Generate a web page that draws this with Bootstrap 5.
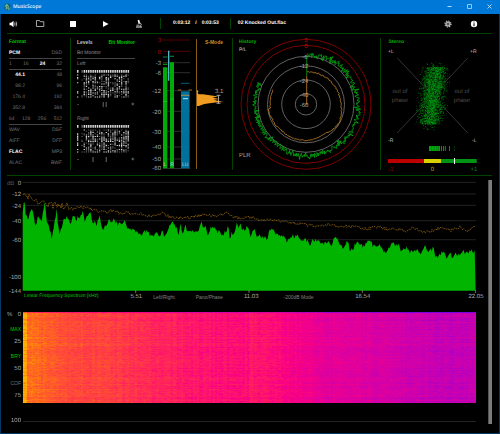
<!DOCTYPE html>
<html lang="en">
<head>
<meta charset="utf-8">
<meta name="viewport" content="width=device-width, initial-scale=1">
<title>MusicScope</title>
<link href="https://cdn.jsdelivr.net/npm/bootstrap@5.3.0/dist/css/bootstrap.min.css" rel="stylesheet">
<style>
  :root { --line: #004400; --dim: #747474; --soft: #b0b0b0; --go: #00c800; }
  body { background: #000; color: var(--soft); font-family: "Liberation Sans", Arial, sans-serif; font-size: 5px; line-height: 11px; text-rendering: geometricPrecision; }
  button { background: none; border: 0; padding: 0; color: inherit; line-height: inherit; text-align: center; white-space: nowrap; }
  svg { display: block; overflow: visible; }
  svg.fluid { width: 100%; height: auto; }
  svg text { font-size: 6px; fill: #a8a8a8; }
  svg .small-label { font-size: 5px; fill: #d0d0d0; }
  svg .head-label { font-size: 5px; font-weight: bold; fill: #00b000; }
  svg .faint { fill: #4c4c4c; }
  .titlebar { background: #0078d7; height: 14px; color: #e8f4ff; font-family: "Open Sans", "Noto Sans", sans-serif; padding-left: 4px; }
  .titlebar button { width: 20px; height: 14px; }
  .titlebar h1 { font-size: 5px; line-height: 14px; margin: 0 0 0 2px; }
  .frame { border: 1px solid #053a66; border-top: 0; padding: 0 7px 4px 6px; }
  .tools { height: 20px; border-bottom: 1px solid var(--line); color: #fff; }
  .tools button { width: 12px; height: 12px; }
  .tools .set { gap: 21px; margin-left: 15px; }
  .tools .clock { border: solid var(--line); border-width: 0 1px; margin-left: 15px; padding: 0 11px 0 12px; gap: 5px; }
  .tools .track-name { margin-left: 7px; }
  .tools .side { gap: 14px; padding-right: 12px; }
  .panels { display: grid; grid-template-columns: minmax(0,64fr) minmax(0,72fr) minmax(0,90fr) minmax(0,148fr) minmax(0,111fr); padding: 4px 0 5px; border-bottom: 1px solid var(--line); }
  .panels > section { position: relative; }
  .ruled { border-right: 1px solid var(--line); }
  .panel-head { line-height: 8px; margin-bottom: 2px; font-weight: bold; color: #c0c0c0; }
  .panel-head h2 { font-size: 5px; line-height: 8px; font-weight: bold; }
  .go, .panel-head .go { color: var(--go); }
  .formats { padding: 0 8px 0 2px; color: var(--dim); }
  .formats .line, .monitor .line { border-bottom: 1px solid #444; line-height: 10px; }
  .formats .rate { width: 16px; text-align: right; }
  .formats .on { color: #fff; font-weight: bold; }
  .monitor { padding: 0 8px 0 6px; color: #8c8c8c; }
  .smode { position: absolute; top: 0; right: 9px; line-height: 8px; color: #d08c20; font-weight: bold; }
  .track { width: 4px; background: #7c7c7c; border-left: 1px solid #555; margin: 4px 0 0 3px; }
  .axis { display: grid; grid-template-columns: repeat(4, minmax(0,1fr)); margin: 0 9px 10px 16px; line-height: 9px; color: #808080; }
  .axis .tick { width: 16px; margin: 1px -8px 0 auto; text-align: center; font-size: 6px; line-height: 9px; color: #a8a8a8; }
  .cell-a { padding-left: 1px; }
  .cell-b { padding-left: 17px; gap: 21px; }
  .cell-c { padding-left: 34px; }
  .history-scale { width: 14px; margin-right: 2px; padding-bottom: 4px; line-height: 6px; color: #a8a8a8; font-size: 6px; }
  .history-scale button { line-height: 6px; font-size: 5px; }
  .history-scale .off { color: #707070; }
  .heat { width: 100%; height: auto; display: block; }
  .heat-wrap { margin-right: 9px; min-width: 0; }
  .full { margin: 15px 9px 0 0; line-height: 6px; font-size: 6px; color: #a8a8a8; }
  .full span { width: 14px; margin-right: 2px; text-align: right; }
  .full hr { margin: 0; opacity: 1; border-color: #222; }
</style>
<script src="https://cdn.jsdelivr.net/npm/bootstrap@5.3.0/dist/js/bootstrap.bundle.min.js"></script>
</head>
<body>
<div class="min-vh-100 d-flex flex-column">
  <header class="titlebar d-flex align-items-center">
    <svg width="7" height="8" viewBox="0 0 7 8"><circle cx="3.500" cy="4" r="3.400" fill="#14607c"/><path d="M1 4a2.500 2.500 0 0 1 2-2.400M6 4.500A2.500 2.500 0 0 1 4.500 6.400" fill="none" stroke="#5cc08c" stroke-width=".9"/><path d="M2.200 6.500 3 1.500 4.400 3.400 3.800 5.200 5 6.800" fill="none" stroke="#9ad8a0" stroke-width=".8"/></svg>
    <h1 class="fw-semibold">MusicScope</h1>
    <div class="ms-auto d-flex">
      <button type="button" aria-label="Minimize"><svg width="20" height="14"><path d="M7.500 6.500h4" stroke="#b8dcff"/></svg></button>
      <button type="button" aria-label="Maximize"><svg width="20" height="14"><path d="M7.500 4.500h4v4h-4z" fill="none" stroke="#b8dcff" stroke-width=".8"/></svg></button>
      <button type="button" aria-label="Close"><svg width="20" height="14"><path d="M7.500 4.500l4 4m0-4l-4 4" stroke="#d8ecff" stroke-width=".8"/></svg></button>
    </div>
  </header>

  <main class="frame flex-grow-1">
    <nav class="tools d-flex align-items-center">
      <button type="button" aria-label="Volume"><svg width="12" height="12"><path d="M2.500 4.800h1.700L6.500 2.800v6.400L4.200 7.300H2.500z" fill="#fff"/><path d="M7.600 4.500q1 1.500 0 3M9 3.600q1.500 2.400 0 4.800" fill="none" stroke="#ddd" stroke-width=".8"/></svg></button>
      <div class="set d-flex">
        <button type="button" aria-label="Open"><svg width="12" height="12"><path d="M2.500 8.500v-6h3l.7 1.200h3.600v4.800z" fill="none" stroke="#ccc" stroke-width=".8"/></svg></button>
        <button type="button" aria-label="Stop"><svg width="12" height="12"><path d="M3 3h6v6H3z" fill="#fff"/></svg></button>
        <button type="button" aria-label="Play"><svg width="12" height="12"><path d="M3 3l5.500 3L3 9z" fill="#fff"/></svg></button>
        <button type="button" aria-label="Analyze"><svg width="12" height="12"><path d="M4.600 2.300l1.700-.5.9 3.600-1.700.5zM3 8.600h6v1H3z" fill="#eee"/><path d="M7 4.500q2.300 1.600.3 4.100M3.500 7.200h3" fill="none" stroke="#ddd" stroke-width=".8"/></svg></button>
      </div>
      <div class="clock d-flex fw-bold"><span>0:03:12</span><span>/</span><span>0:03:53</span></div>
      <div class="track-name fw-bold">02 Knocked Out.flac</div>
      <div class="side d-flex ms-auto">
        <button type="button" aria-label="Settings"><svg width="12" height="12"><circle cx="6" cy="6" r="2.600" fill="#aaa"/><circle cx="6" cy="6" r="3" fill="none" stroke="#ccc" stroke-width="1.200" stroke-dasharray="1.180"/><circle cx="6" cy="6" r="1" fill="#333"/></svg></button>
        <button type="button" aria-label="Information"><svg width="12" height="12"><circle cx="6" cy="6" r="3.200" fill="#fff"/><path d="M5.500 3.600h1v1h-1zM5.500 5.300h1v3h-1z" fill="#000"/></svg></button>
      </div>
    </nav>

    <div class="panels">
      <section class="ruled formats">
        <div class="panel-head"><h2 class="m-0 go">Format</h2></div>
        <div class="d-flex justify-content-between line"><span class="on">PCM</span><span>DSD</span></div>
        <div class="d-flex justify-content-between line"><span>1</span><span>16</span><span class="on">24</span><span>32</span></div>
        <div class="d-flex justify-content-between"><span class="rate on">44.1</span><span>48</span></div>
        <div class="d-flex justify-content-between"><span class="rate">88.2</span><span>96</span></div>
        <div class="d-flex justify-content-between"><span class="rate">176.4</span><span>192</span></div>
        <div class="d-flex justify-content-between"><span class="rate">352.8</span><span>384</span></div>
        <div class="d-flex justify-content-between line"><span>64</span><span>128</span><span>256</span><span>512</span></div>
        <div class="d-flex justify-content-between"><span>WAV</span><span>DSF</span></div>
        <div class="d-flex justify-content-between"><span>AIFF</span><span>DFF</span></div>
        <div class="d-flex justify-content-between"><span class="on">FLAC</span><span>MP3</span></div>
        <div class="d-flex justify-content-between"><span>ALAC</span><span>BWF</span></div>
      </section>

      <section class="monitor">
        <div class="panel-head d-flex justify-content-between"><button type="button" class="fw-bold">Levels</button><button type="button" class="fw-bold go">Bit Monitor</button></div>
        <div class="line">Bit Monitor</div>
        <div>Left</div>
        <svg class="fluid" viewBox="0 0 58 44"><g id="bitsL"></g><path d="M26.200 32v5M29.200 32v5" stroke="#999" stroke-width=".7"/><text x="0" y="36">-</text><text x="54" y="36">+</text></svg>
        <div>Right</div>
        <svg class="fluid" viewBox="0 0 58 44"><g id="bitsR"></g><path d="M16 32v5M29.200 32v5" stroke="#999" stroke-width=".7"/><text x="0" y="36">-</text><text x="54" y="36">+</text></svg>
      </section>

      <section class="ruled">
        <svg class="fluid" viewBox="143 38 89 132">
          <path d="M163 62.700h27M163 72.700h27M163 90.700h27M163 111.300h27M163 131.300h27M163 147h27M163 159h27M163 168.500h27" stroke="#383838" stroke-width=".8"/>
          <path d="M163 40h27M163 51.300h27" stroke="#700000" stroke-width=".8"/>
          <g text-anchor="end">
            <text x="161" y="42" style="fill:#b00000">3</text><text x="161" y="53.500" style="fill:#b00000">0</text>
            <text x="161" y="65">-3</text><text x="161" y="75">-6</text><text x="161" y="93">-12</text><text x="161" y="113.500">-20</text><text x="161" y="133.500">-30</text><text x="161" y="149">-40</text><text x="161" y="161">-50</text><text x="161" y="170">-60</text>
          </g>
          <path d="M163 67.300h4.300v101H163zM170 62.300h4v106h-4z" fill="#00aa08"/>
          <path d="M163 64.300h4.300M163 101.500h4.300M170 99h4" stroke="#00d820" stroke-width=".8"/>
          <path d="M163 57h4.300M170 56.300h4" stroke="#009c50" stroke-width=".9"/>
          <path d="M168.700 50.700v30" stroke="#60c8e0" stroke-width="1.200"/>
          <path d="M181 91.300h8.500v77H181z" fill="#00709c"/>
          <path d="M181 83.300h8.500" stroke="#006080" stroke-width="1"/>
          <path d="M181 95.300h8.500" stroke="#a09050" stroke-width="1"/>
          <path d="M183 98.700h5" stroke="#fff" stroke-width=".8"/>
          <path d="M178 90h14" stroke="#b07818" stroke-width=".9" stroke-dasharray="3.500 7"/>
          <text x="163.500" y="166" class="small-label">L</text><text x="170.200" y="166" class="small-label">R</text><text x="182" y="166" class="small-label">LU</text>
          <path d="M196.500 39v130" stroke="#8a5c14" stroke-width="1"/>
          <path d="M197 90l1.500 1-.8 2 1 1.300H203l5 .6 7 1 3.500.8-6 .6 3 .9 4 .8-6 .8 4 .9 6 1.200-8 .7-6 .6-5 .8-3 .9-2.500 1L197 106z" fill="#f09c20"/>
          <path d="M218.500 95.300v8M216.500 95.300h4M216.500 103.300h4" stroke="#ddd" stroke-width=".7"/>
          <text x="215" y="93">3.1</text>
        </svg>
        <button type="button" class="smode">S-Mode</button>
      </section>

      <section class="ruled">
        <svg class="fluid" viewBox="233 38 147 132">
          <g fill="none" stroke="#6c6c6c" stroke-width=".9"><circle cx="306" cy="104.300" r="48"/><circle cx="306" cy="104.300" r="38.500"/><circle cx="306" cy="104.300" r="24.300"/><circle cx="306" cy="104.300" r="10.700"/></g>
          <g fill="none" stroke="#a00000" stroke-width=".8"><circle cx="306" cy="104.300" r="65"/><circle cx="306" cy="104.300" r="59"/></g>
          <path id="plr" fill="none" stroke="#c88420" stroke-width=".8"/>
          <path id="ppl" fill="none" stroke="#00ac10" stroke-width=".8"/>
          <path d="M306.700 76V56" stroke="#009c08" stroke-width=".8"/><path d="M306.700 105V76" stroke="#c88420" stroke-width=".8"/>
          <g text-anchor="middle"><text x="306" y="42" style="fill:#d00000">3</text><text x="306" y="48" style="fill:#d00000">0</text><text x="305" y="58.500">-6</text><text x="304" y="68">-12</text><text x="304" y="82.500">-24</text><text x="304" y="96.500">-40</text><text x="304" y="107">-60</text></g>
          <text x="239" y="43" class="head-label">History</text>
          <text x="239" y="51" class="small-label">P/L</text><text x="239" y="157">PLR</text>
        </svg>
      </section>

      <section>
        <svg class="fluid" viewBox="381 38 111 132">
          <path d="M397.300 58l70.500 75M467.700 58l-70.500 75" stroke="#404040" stroke-width=".8"/>
          <g id="cloud"></g>
          <text x="388.500" y="43" class="head-label">Stereo</text>
          <text x="388" y="53" class="small-label">+L</text><text x="470" y="53" class="small-label">+R</text><text x="388" y="142" class="small-label">-R</text><text x="472" y="142" class="small-label">-L</text>
          <g text-anchor="middle"><text x="400" y="93" class="faint">out of</text><text x="400" y="102" class="faint">phase</text><text x="462" y="93" class="faint">out of</text><text x="462" y="102" class="faint">phase</text></g>
          <path d="M429 146h11v5h-11z" fill="#00a810"/><path d="M431.500 146v5M434 146v5M436.800 146v5M438.500 146v5" stroke="#006808" stroke-width=".6"/><path d="M441.500 146v5M443.500 146v5M445.300 146v5M449.500 146v5" stroke="#00a810" stroke-width=".9"/><path d="M454.500 146v5" stroke="#004808" stroke-width=".6"/>
          <path d="M388 159h36v4h-36z" fill="#bc0000"/><path d="M424 159h17v4h-17z" fill="#d8d000"/><path d="M441 159h35.700v4H441z" fill="#009414"/><path d="M454.500 158v6" stroke="#fff"/>
          <text x="388" y="170.500" style="fill:#a00000">-1</text><text x="432.500" y="170.500" text-anchor="middle" style="fill:#b0a800">0</text><text x="470.500" y="170.500" style="fill:#008810">+1</text>
        </svg>
      </section>
    </div>

    <div class="d-flex">
      <div class="flex-grow-1 w-100">
        <svg class="fluid" viewBox="7 176 478 116">
          <path d="M22.700 182.300h453M22.700 194h453M22.700 205.300h453M22.700 220.700h453M22.700 239.700h453" stroke="#262626" stroke-width=".9"/>
          <path id="spectrum" fill="#00b400"/>
          <path id="peaks" fill="none" stroke="#9a6a10" stroke-width=".8" stroke-dasharray="1.500 .9"/>
          <path d="M135.700 290v3M249 290v3M362.300 290v3M475.400 290v3" stroke="#999" stroke-width=".7"/>
          <text x="7" y="184.500" style="fill:#585858">dB</text>
          <g text-anchor="end"><text x="21" y="184.500">0</text><text x="21" y="196.200">-12</text><text x="21" y="207.500">-24</text><text x="21" y="223">-40</text><text x="21" y="242">-60</text><text x="21" y="278.500">-100</text><text x="21" y="292.500">-144</text></g>
        </svg>
        <div class="axis">
          <div class="d-flex cell-a"><span class="go text-nowrap">Linear Frequency Spectrum [kHz]</span><span class="tick">5.51</span></div>
          <div class="d-flex cell-b"><button type="button">Left/Right</button><button type="button">Pano/Phase</button><span class="tick">11.03</span></div>
          <div class="d-flex cell-c"><button type="button">-200dB Mode</button><span class="tick">16.54</span></div>
          <div class="d-flex"><span class="tick">22.05</span></div>
        </div>
        <div class="d-flex">
          <div class="history-scale d-flex flex-column justify-content-between align-items-end flex-shrink-0">
            <div class="d-flex justify-content-between w-100"><span>%</span><span>0</span></div>
            <button type="button" class="go">MAX</button><span>25</span>
            <button type="button" class="go">BRY</button><span>50</span>
            <button type="button" class="off">COF</button><span>75</span>
          </div>
          <div class="heat-wrap flex-grow-1"><canvas id="heat" class="heat" width="453" height="91"></canvas></div>
        </div>
        <div class="full d-flex align-items-center"><span class="flex-shrink-0">100</span><hr class="flex-grow-1"></div>
      </div>
      <div class="track flex-shrink-0"></div>
    </div>
  </main>
</div>

<script>
let seed = 7;
const rnd = () => (seed = (seed * 16807) % 2147483647) / 2147483647;
const noise = a => (rnd() - .5) * 2 * a;
const gauss = () => (rnd() + rnd() + rnd() - 1.5) / 1.5;
const at = (list, x) => {
  let i = 0;
  while (i < list.length - 4 && list[i + 2] < x) i += 2;
  const k = Math.max(0, Math.min(1, (x - list[i]) / (list[i + 2] - list[i])));
  return list[i + 1] + k * (list[i + 3] - list[i + 1]);
};
const byId = id => document.getElementById(id);

// Bit usage grids
for (const id of ['bitsL', 'bitsR']) {
  let bright = '', dim = '';
  for (let c = 0; c < 24; c++) {
    if (c === 1) continue;
    const x = (c * 2.2).toFixed(1);
    const head = `M${x} 0h1.500v2.700h-1.500z`;
    if (c === 2) dim += head; else bright += head;
    for (let r = 0; r < 18; r++) {
      const p = rnd();
      const cell = `M${x} ${(4.4 + r * 1.3).toFixed(1)}h1.300v1h-1.300z`;
      if (c === 2) { if (p < .3) dim += cell; }
      else if (p < .38) bright += cell;
      else if (p < .72 && c > 2) dim += cell;
    }
  }
  byId(id).innerHTML = `<path d="${dim}" fill="#5c5c5c"/><path d="${bright}" fill="#d8d8d8"/>`;
}

// Loudness history, clockwise from the top
const ring = (list, jitter, step) => {
  let d = '';
  for (let a = 2; a <= 295; a += step) {
    const r = at(list, a) + noise(jitter) * (rnd() < .25 ? 1.8 : 1), t = a * Math.PI / 180;
    d += (d ? 'L' : 'M') + (306 + r * Math.sin(t)).toFixed(1) + ' ' + (104.3 - r * Math.cos(t)).toFixed(1);
  }
  return d;
};
byId('ppl').setAttribute('d', ring([0, 49, 30, 51, 60, 51, 90, 52, 120, 53, 150, 51, 180, 52, 220, 50, 270, 51, 295, 51], 2.2, .7));
byId('plr').setAttribute('d', ring([0, 32, 25, 33, 60, 34, 90, 35, 120, 38, 150, 35, 180, 36, 225, 36, 262, 38, 264, 36, 295, 36], .5, 2));

// Stereo field
const cloud = ['', '', ''];
for (let i = 0; i < 3000; i++) {
  const v = noise(1) * (rnd() < .12 ? 1 : .84), y = 95.5 + v * 34;
  const x = 432.5 - v * 3.5 + gauss() * 17 * (Math.abs(v) > .85 ? .8 : 1);
  cloud[i % 3] += `M${x.toFixed(1)} ${y.toFixed(1)}h.7v.7h-.7z`;
}
byId('cloud').innerHTML = cloud.map((d, i) => `<path d="${d}" fill="${['#004c04', '#006c08', '#009c14'][i]}"/>`).join('');

// Spectrum curve: frequency position, level position
const level = [22.7,211,24.3,198,26,217,28,218,30.7,211,32.7,209,34.3,219,36,227,37.7,217,40,217,41.3,224,43.3,209,45,203,46.7,222,48.7,226,51.7,237,54,227,56.7,209,58.3,227,60,233,63.3,220,66.7,218,69,219,70.7,224,73.3,215,76,220,78.3,217,80.7,217,82.7,210,84.7,222,87.3,217,90.7,212,92.7,224,94.3,222,96.7,225,99.3,214,101.3,226,104,229,107.3,222,110.7,221,114.3,219,117.3,224,119.3,223,122,227,124,220,126,225,129.3,229,132,229,134.7,231,137.3,232,140,236,143.3,232,146.7,231,150,235,152.7,236,156.7,231,160,236,162.7,232,165,235,167.7,231,170.7,223,173.3,223,176,227,178.7,233,180.7,226,182.7,232,185.3,225,188.3,232,191,233,193.3,230,196.7,232,199,230,202,223,204,229,206,227,208,236,210.7,227,214,227,216.7,232,219.3,231,222,236,224,233,226,233,228,225,230,239,232,233,234.3,232,236.7,222,238.7,227,240.7,226,243.3,231,246,229,247.7,226,250,237,252,233,254,227,256,234,260,236,263.3,237,267.3,240,269.3,230,273.3,230,276.7,235,281.7,234,285,239,287.3,242,290,237,295,236,300,237,302.7,240,305,239,308.3,242,310.7,244,313.3,239,318.3,242,323.3,243,327.3,241,331.7,245,335,237,338.3,242,342.7,248,347.7,241,350,251,352.7,249,356.7,241,360,246,365,245,370,241,373.3,246,377.3,247,380,244,383.3,250,386.7,252,390,246,392.7,243,396,246,398.7,243,401.7,252,406.7,248,410,252,415,249,418.3,251,420.7,255,424.3,246,428.3,251,433.3,249,436.7,258,440,253,444.3,253,446.7,259,450,253,452.7,257,456,254,460,256,463.3,252,466.7,253,470,252,473.3,251,475.3,250];
let area = 'M22.700 290.700';
for (let x = 22.7; x <= 475.4; x += 1) area += `L${x.toFixed(1)} ${(at(level, x) + noise(2.4)).toFixed(1)}`;
byId('spectrum').setAttribute('d', area + 'L475.600 290.700z');

const ceiling = [23,195,30,198,37,202,43,204,50,205,60,206,67,206,73,209,80,207,87,208,97,211,107,212,115,210,120,214,127,212,133,215,140,213,147,216,153,216,163,213,170,217,177,218,187,218,197,216,207,215,217,216,227,213,233,217,243,218,254,217,258,220,273,220,287,222,303,224,313,226,323,226,330,224,337,227,347,226,357,227,367,229,377,227,387,229,397,229,407,231,413,227,420,231,428,232,437,229,443,227,450,231,460,227,467,231,475,227];
let peak = '';
for (let x = 23; x <= 475; x += 1) peak += (peak ? 'L' : 'M') + x + ' ' + (at(ceiling, x) + noise(x < 70 ? 3.5 : 1.5)).toFixed(1);
byId('peaks').setAttribute('d', peak);

// Spectrogram
const ctx = byId('heat').getContext('2d'), w = 453, h = 91, img = ctx.createImageData(w, h);
const red = [0,120, .2,195, .45,250, .6,255, 1,255], green = [0,0, .45,0, .6,34, .8,88, .9,122, 1,180], blue = [0,225, .2,182, .45,132, .6,92, .8,44, .9,16, 1,0];
const base = [0,.99, 3,.95, 4,.87, 20,.82, 40,.76, 80,.71, 130,.62, 180,.53, 225,.5, 228,.55, 260,.47, 300,.36, 340,.31, 390,.25, 430,.2, 453,.24];
const cols = Array.from({ length: w }, () => noise(.025));
const rows = Array.from({ length: h }, () => noise(.035));
for (let y = 0; y < h; y++) {
  let run = 0;
  for (let x = 0; x < w; x++) {
    if (x % 3 === 0) run = noise(.045);
    const edge = y === 0 ? -.2 : 0;
    const t = Math.max(0, Math.min(1, at(base, x) + cols[x >> 1] + rows[y] + run + noise(.02) + edge));
    img.data.set([at(red, t), at(green, t), at(blue, t), 255], (y * w + x) * 4);
  }
}
ctx.putImageData(img, 0, 0);
</script>
</body>
</html>
